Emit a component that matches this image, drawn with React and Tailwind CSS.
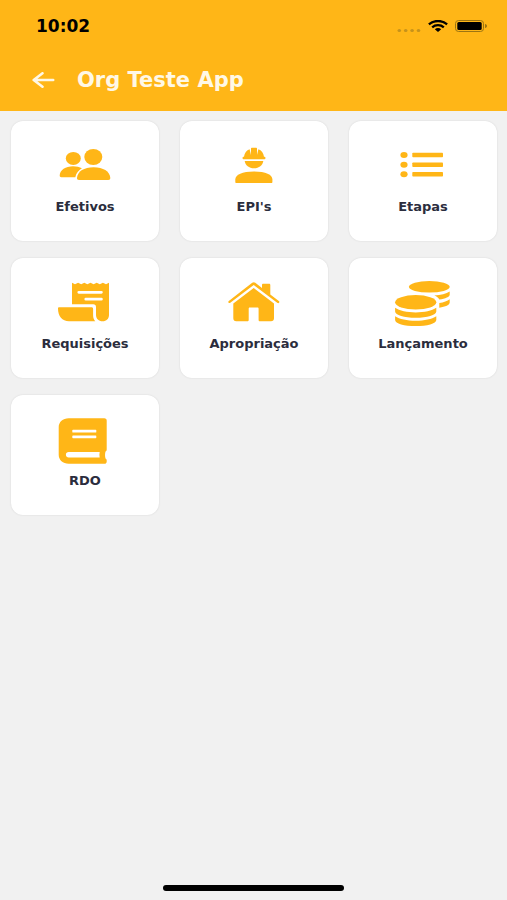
import React from 'react';

function PeopleIcon() {
  return (
    <>
      <ellipse cx="18.3" cy="17.4" rx="7.5" ry="6.5" />
      <ellipse cx="38.3" cy="16" rx="9" ry="8" />
      <path d="M4.7 34.6c0-5.6 6-9.4 13.3-9.4 3.6 0 6.6.8 8.9 2.1C23.5 29.4 21.2 32 20.3 36.2H6.3c-1 0-1.6-.6-1.6-1.6Z" />
      <path d="M22 36.8C22.6 30.4 29 26.3 38.6 26.3S54.7 30.4 55.3 36.8c.1 1.4-.7 2.2-2 2.2H24c-1.3 0-2.1-.8-2-2.2Z" />
    </>
  );
}

function WorkerIcon() {
  return (
    <>
      <path d="M20 15.8C20.4 12 22.6 9.3 25.6 8.2L27 14V7.7c0-.6.4-1 1-1h4c.6 0 1 .4 1 1V14l1.400-5.800C37.400 9.300 39.600 12 40 15.800h.6c.5 0 .8.400.8.800v.8c0 .5-.3.800-.8.800H19.400c-.5 0-.8-.3-.8-.8v-.8c0-.4.3-.8.8-.8Z" />
      <path d="M20.7 20h18.6c-.6 4.3-4.3 7.3-9.3 7.3S21.3 24.3 20.7 20Z" />
      <path d="M11.3 38.500c0-4.800 7-7.900 18.700-7.900s18.400 3.100 18.400 7.900V41c0 .6-.4 1-1 1H12.300c-.6 0-1-.4-1-1Z" />
    </>
  );
}

function ListIcon() {
  return (
    <>
      {[14, 23.7, 33.3].map((y) => (
        <g key={y}>
          <ellipse cx="11" cy={y} rx="3.6" ry="3" />
          <rect x="19.3" y={y - 2.3} width="30.7" height="4.6" rx=".8" />
        </g>
      ))}
    </>
  );
}

function ReceiptIcon() {
  return (
    <>
      <path d="M17 4.7l3 1.5 3.1-1.5 3.1 1.5 3.1-1.5 3.1 1.5 3.1-1.5 3.1 1.5 3.1-1.5 3.1 1.5 3.1-1.5 3.1 1.5L54 4.7V37c0 3.8-2.6 6.3-6.4 6.3S41 40.8 41 37v-8c0-1.6-1-2.7-2.7-2.7H17Z" />
      <path d="M4.2 29.2h32.3c1 0 1.6.7 1.6 1.7V37c0 2.8.7 4.6 2.2 6.3H14C7.2 43.3 3 38.5 3 30.6c0-.9.4-1.4 1.2-1.4Z" />
      <path
        className="stroke-white"
        d="M23.8 14.3h22.6M30.8 21.2h15.6"
        fill="none"
        strokeLinecap="round"
        strokeWidth="2.8"
      />
    </>
  );
}

function HouseIcon() {
  return (
    <>
      <path d="M28.2 4.8c1-.8 2.1-.8 3.1 0l6.7 5.1V6.9c0-.7.5-1.2 1.2-1.2h5.9c.7 0 1.2.5 1.2 1.2v9.5l8.5 6.7c.7.6.8 1.2.2 1.7-.5.5-1.2.4-1.8-.1L29.7 7.1 6.3 24.7c-.6.5-1.3.5-1.7 0-.5-.5-.4-1.1.2-1.6Z" />
      <path d="M29.7 10 50 25.4v14.9c0 1.900-1.100 3-3 3H36c-.9 0-1.400-.5-1.400-1.400V30.700c0-.7-.4-1.100-1.100-1.100h-7.700c-.7 0-1.100.4-1.100 1.100v11.200c0 .9-.5 1.400-1.400 1.400h-11c-1.900 0-3-1.100-3-3V25.400Z" />
    </>
  );
}

function CoinsIcon() {
  return (
    <>
      <ellipse cx="36.3" cy="8.8" rx="20.4" ry="5.8" />
      <path d="M56.7 13.6v3.2c0 2.1-4.2 3.9-10.4 4.8-.8-1.6-2.5-2.9-5-4 6.5-.4 12-1.9 15.4-4Z" />
      <path d="M56.7 21.3v3.3c0 2.3-4.2 4.3-10.4 5.2v-4.7c4.5-.7 8.1-2 10.4-3.8Z" />
      <ellipse cx="22.7" cy="24.3" rx="20.6" ry="7.2" />
      <path d="M2.1 29.8c4.4 3 11.9 4.6 20.6 4.6s16.2-1.6 20.6-4.6v3.7c0 3.5-9.2 6.3-20.6 6.3S2.1 37 2.1 33.5Z" />
      <path d="M2.1 38.3c4.4 2.900 11.900 4.500 20.600 4.500s16.200-1.600 20.600-4.500v3.600c0 3.500-9.200 6.200-20.600 6.200S2.100 45.400 2.100 41.900Z" />
    </>
  );
}

function BookIcon() {
  return (
    <>
      <path d="M13.7 3.3h35.6c1.5 0 2.4.9 2.4 2.3v28.8c0 .9-.4 1.6-1.2 2-.6 2.2-.6 4.7 0 7 .8.4 1.2 1 1.2 1.9v1.1c0 1.4-.9 2.3-2.4 2.3H13.7c-5.8 0-10-3.8-10-9V12.3c0-5.2 4.2-9 10-9Z" />
      <g className="fill-white">
        <rect x="17.3" y="14.8" width="24" height="2.8" rx=".7" />
        <rect x="17.3" y="20.4" width="24" height="2.8" rx=".7" />
        <path d="M13.7 37h31c-.4 1.8-.4 3.6 0 5.4h-31c-1.7 0-2.8-1.1-2.8-2.7s1.1-2.7 2.8-2.7Z" />
      </g>
    </>
  );
}

const modules = [
  { label: 'Efetivos', Icon: PeopleIcon },
  { label: "EPI's", Icon: WorkerIcon },
  { label: 'Etapas', Icon: ListIcon },
  { label: 'Requisições', Icon: ReceiptIcon },
  { label: 'Apropriação', Icon: HouseIcon },
  { label: 'Lançamento', Icon: CoinsIcon },
  { label: 'RDO', Icon: BookIcon },
];

function StatusBar() {
  return (
    <div className="flex h-[52px] items-center justify-between pr-5 pl-9 text-black">
      <span className="text-[17px] leading-6 font-bold">10:02</span>
      <div className="flex items-center gap-[7px]">
        <svg aria-hidden="true" className="h-4 w-6 fill-[#c6921b]" viewBox="0 0 24 16">
          <ellipse cx="2.3" cy="12.5" rx="1.8" ry="1.5" />
          <ellipse cx="8.7" cy="12.5" rx="1.8" ry="1.5" />
          <ellipse cx="15.1" cy="12.5" rx="1.8" ry="1.5" />
          <ellipse cx="21.5" cy="12.5" rx="1.8" ry="1.5" />
        </svg>
        <svg aria-hidden="true" className="h-3 w-5" viewBox="0 0 20 12">
          <g fill="none" stroke="currentColor" strokeWidth="2.3">
            <path d="M.9 4.3C5.8-.1 14.2-.1 19.1 4.3" />
            <path d="M4.2 7.3c3.2-2.8 8.4-2.8 11.6 0" />
          </g>
          <path d="M6.8 9.2c1.8-1.5 4.6-1.5 6.4 0L10 12Z" fill="currentColor" />
        </svg>
        <svg aria-hidden="true" className="h-3 w-8" viewBox="0 0 32 12">
          <rect
            x=".5"
            y=".5"
            width="28"
            height="11"
            rx="3"
            fill="none"
            stroke="#9c7412"
          />
          <rect x="2.3" y="2" width="24.4" height="8" rx="1.6" fill="currentColor" />
          <path d="M30 4c1.3.4 2 1.1 2 2s-.7 1.6-2 2Z" fill="#9c7412" />
        </svg>
      </div>
    </div>
  );
}

function ModuleCard({ label, Icon }) {
  return (
    <button
      className="flex flex-col items-center rounded-xl bg-white pt-5 pb-6 shadow-[0_0_2px_rgba(0,0,0,0.12)]"
      type="button"
    >
      <svg aria-hidden="true" className="h-[50px] w-[60px] fill-[#ffb617]" viewBox="0 0 60 50">
        <Icon />
      </svg>
      <span className="mt-1.5 text-[13px] leading-5 font-bold text-[#2b2d3d]">{label}</span>
    </button>
  );
}

export default function App() {
  return (
    <div className="flex min-h-screen flex-col bg-[#f1f1f1] font-['DejaVu_Sans',sans-serif]">
      <header className="bg-[#ffb617] pb-[3px]">
        <StatusBar />
        <div className="flex h-14 items-center gap-[22px] pl-8">
          <button aria-label="Voltar" className="text-[#fff8e6]" type="button">
            <svg
              aria-hidden="true"
              className="h-4 w-[23px]"
              fill="none"
              stroke="currentColor"
              strokeLinecap="round"
              strokeLinejoin="round"
              strokeWidth="2.6"
              viewBox="0 0 23 16"
            >
              <path d="M10.5 1.3 1.7 8l8.8 6.7M2.2 8h19" />
            </svg>
          </button>
          <h1 className="text-[21px] leading-7 font-bold text-[#fff8e6]">Org Teste App</h1>
        </div>
      </header>

      <main className="grid flex-1 grid-cols-3 content-start gap-x-[21px] gap-y-[17px] pt-[10px] pr-[10px] pl-[11px]">
        {modules.map((item) => (
          <ModuleCard key={item.label} label={item.label} Icon={item.Icon} />
        ))}
      </main>

      <footer className="flex justify-center pb-[9px]">
        <div className="h-1.5 w-[181px] rounded-full bg-black" />
      </footer>
    </div>
  );
}
